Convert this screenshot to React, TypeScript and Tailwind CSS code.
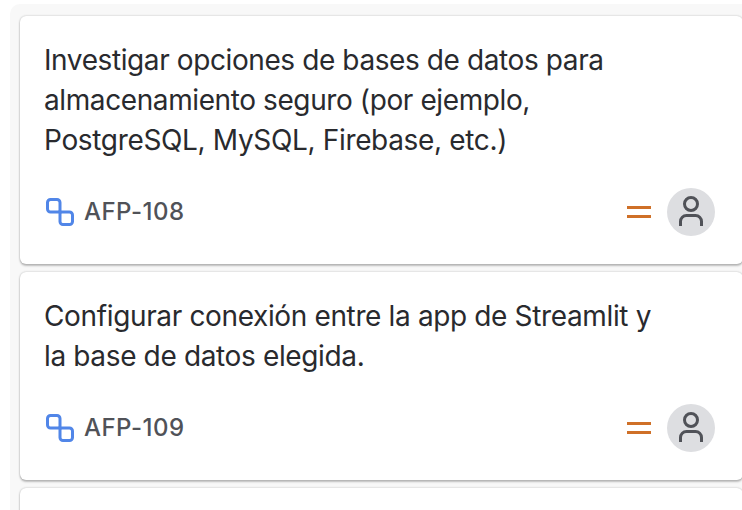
type Line = { text: string; tracking: string };
type Card = { id: string; lines: Line[] };

const cards: Card[] = [
  {
    id: 'AFP-108',
    lines: [
      { text: 'Investigar opciones de bases de datos para', tracking: 'tracking-[-0.4px]' },
      { text: 'almacenamiento seguro (por ejemplo,', tracking: 'tracking-[-0.4px]' },
      { text: 'PostgreSQL, MySQL, Firebase, etc.)', tracking: 'tracking-[-0.34px]' },
    ],
  },
  {
    id: 'AFP-109',
    lines: [
      { text: 'Configurar conexión entre la app de Streamlit y', tracking: 'tracking-[-0.36px]' },
      { text: 'la base de datos elegida.', tracking: 'tracking-[-0.36px]' },
    ],
  },
];

const cardStyle =
  'w-[723px] shrink-0 rounded-[6px] bg-white shadow-[0_2px_2px_rgba(30,31,33,0.25),0_0_2px_rgba(30,31,33,0.31)]';

function SubtaskIcon() {
  return (
    <svg width="32" height="32" viewBox="0 0 32 32" fill="none" stroke="#5186e8" strokeWidth="3">
      <path d="M16 16H6.500a3 3 0 0 1-3-3V6.500a3 3 0 0 1 3-3H13a3 3 0 0 1 3 3z" />
      <path d="M16 16h9.500a3 3 0 0 1 3 3v6.500a3 3 0 0 1-3 3H19a3 3 0 0 1-3-3z" />
    </svg>
  );
}

function Avatar() {
  return (
    <div className="ml-4 h-12 w-12 rounded-full bg-[#dddee1]">
      <svg width="48" height="48" viewBox="0 0 48 48" fill="none" stroke="#505258" strokeWidth="3">
        <circle cx="24" cy="16" r="6.500" />
        <path d="M13.500 38v-4.500a6 6 0 0 1 6-6h9a6 6 0 0 1 6 6v4.500" />
      </svg>
    </div>
  );
}

function IssueCard({ card }: { card: Card }) {
  return (
    <article className={`${cardStyle} px-6 pt-6 pb-7`}>
      <div className="text-[28px] leading-10 whitespace-nowrap text-[#292a2e]">
        {card.lines.map((line) => (
          <p key={line.text} className={line.tracking}>{line.text}</p>
        ))}
      </div>
      <div className="mt-7 flex h-12 items-center pr-1">
        <SubtaskIcon />
        <span className="ml-2 text-[24px] leading-8 font-medium tracking-[0.45px] text-[#505258]">{card.id}</span>
        <div className="ml-auto flex flex-col gap-1.5">
          <div className="h-[3px] w-6 bg-[#cf7028]" />
          <div className="h-[3px] w-6 bg-[#cf7028]" />
        </div>
        <Avatar />
      </div>
    </article>
  );
}

export default function App() {
  return (
    <div className="h-[510px] w-[742px] overflow-hidden bg-white pt-1 pl-[10px] font-['Inter',sans-serif]">
      <div className="flex h-[506px] flex-col gap-2 overflow-hidden rounded-tl-[10px] bg-[#f8f8f8] pt-3 pl-[10px]">
        {cards.map((card) => (
          <IssueCard key={card.id} card={card} />
        ))}
        <div className={`${cardStyle} h-20`} />
      </div>
    </div>
  );
}
